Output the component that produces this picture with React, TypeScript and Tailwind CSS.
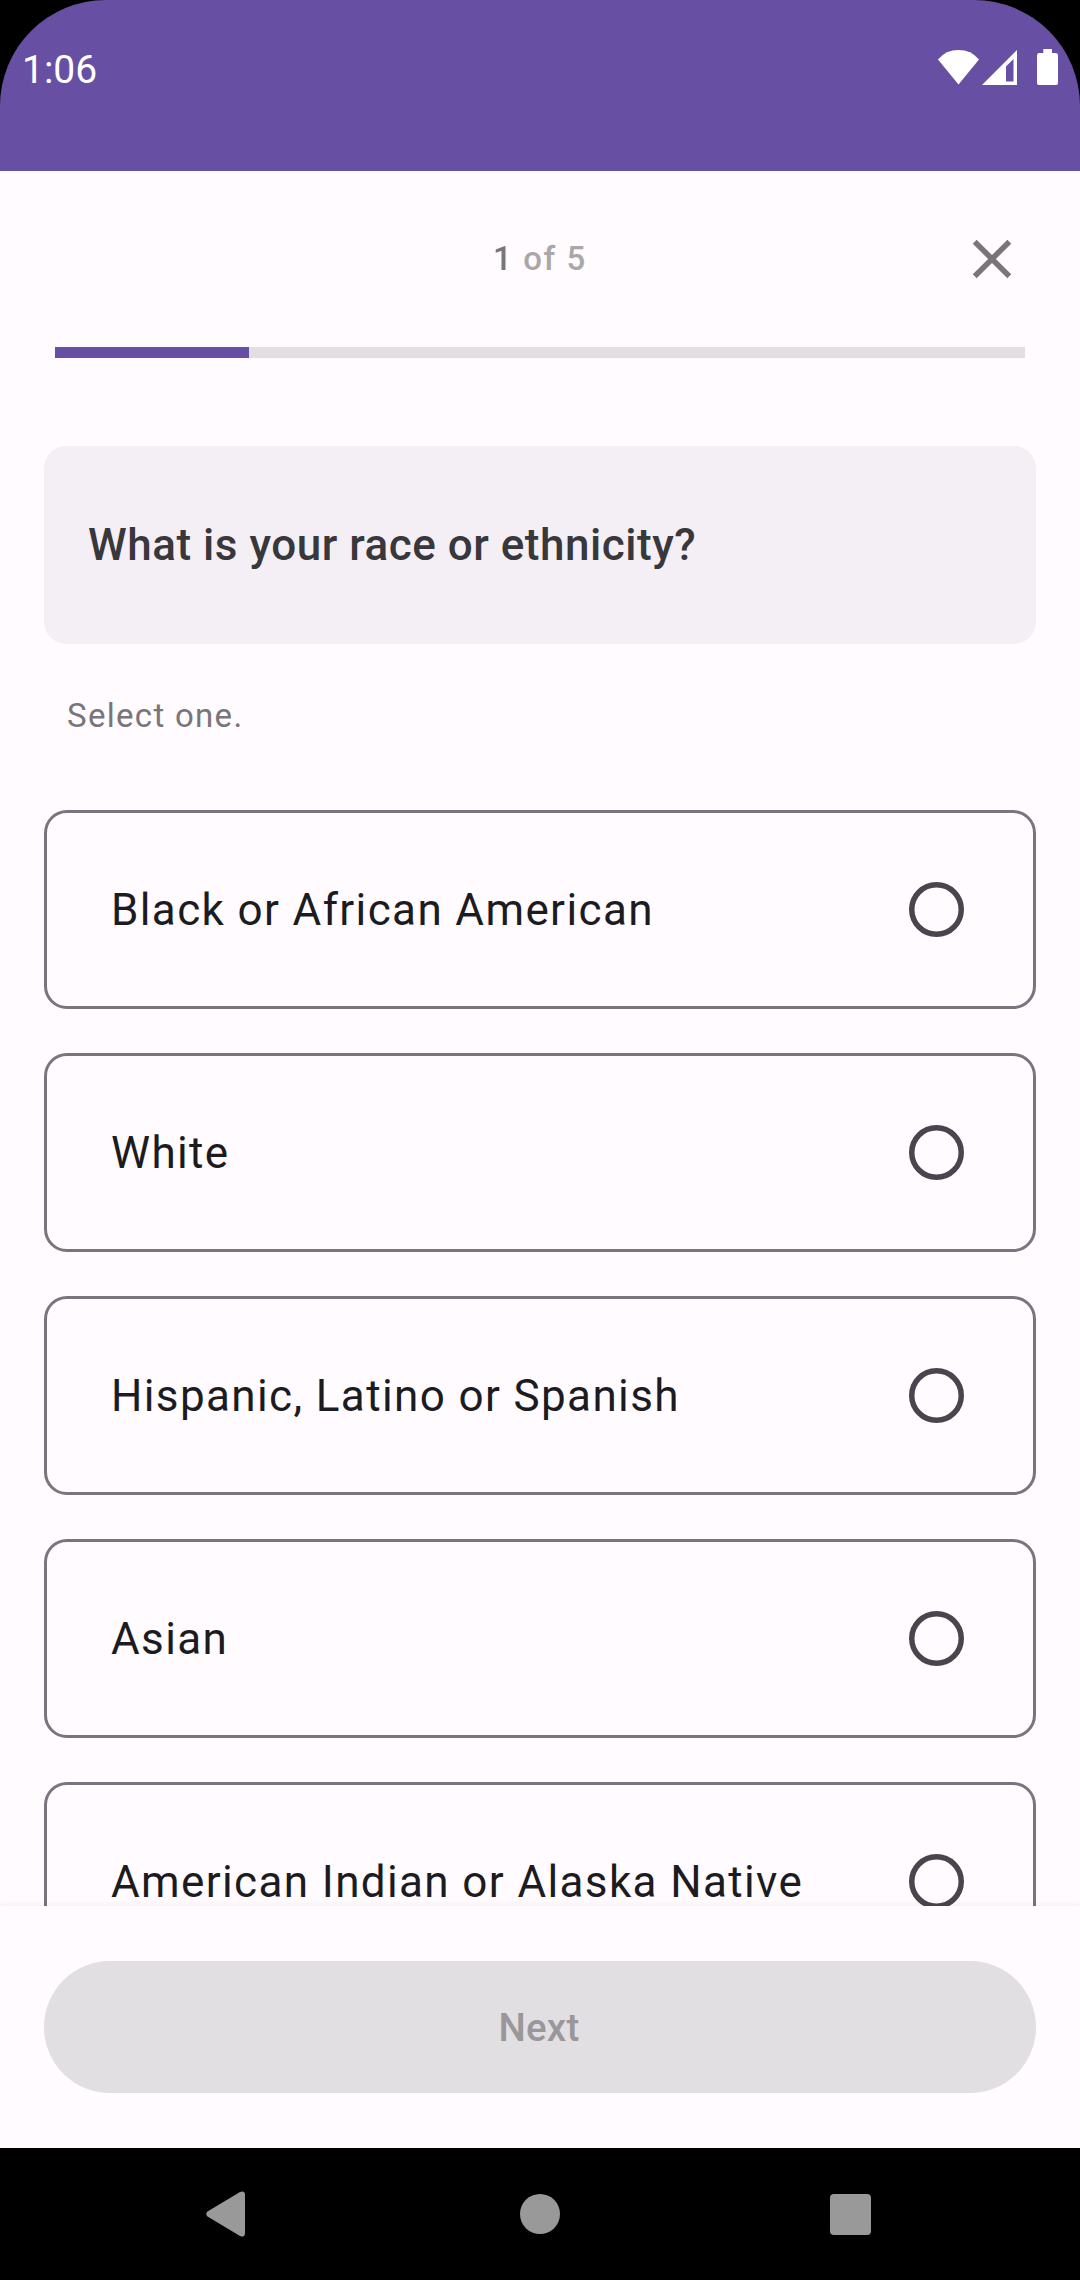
const options = [
  'Black or African American',
  'White',
  'Hispanic, Latino or Spanish',
  'Asian',
  'American Indian or Alaska Native',
];

function StatusBar() {
  return (
    <div className="bg-black h-[171px] shrink-0">
      <div className="h-full bg-[#6750A3] rounded-t-[106px] flex items-start justify-between pl-[22px] pr-[22px]">
        <span className="mt-[48px] text-[39px] leading-[45px] text-white">1:06</span>
        <svg className="mt-[48px]" width="120" height="38" viewBox="938 48 120 38" fill="#fff">
          <path d="M938 59.4 Q946 50 958.5 50 Q971 50 979 59.4 L958.5 84.5 Z" />
          <path fillRule="evenodd" d="M982 85 L1017 50 V85 Z M1006 81.5 H1013.5 V59 L1006 66.5 Z" />
          <path d="M1043.3 49 H1052 V53 H1055.6 Q1058 53 1058 55.4 V82.4 Q1058 85 1055.6 85 H1039.4 Q1037 85 1037 82.4 V55.4 Q1037 53 1039.4 53 H1043.3 Z" />
        </svg>
      </div>
    </div>
  );
}

function Option({ label }: { label: string }) {
  return (
    <div className="h-[199px] shrink-0 border-[3px] border-[#79747E] rounded-[23px] flex items-center justify-between pl-[64px] pr-[69px]">
      <span className="text-[44px] leading-[52px] tracking-[1.375px] text-[#1C1B1F] whitespace-nowrap">{label}</span>
      <svg width="55" height="55" viewBox="0 0 55 55" fill="none" stroke="#49454F" strokeWidth="5.5">
        <circle cx="27.5" cy="27.5" r="24.75" />
      </svg>
    </div>
  );
}

export default function App() {
  return (
    <div className="w-[1080px] h-[2280px] flex flex-col overflow-hidden bg-[#FFFBFF] font-['Roboto',sans-serif] antialiased">
      <StatusBar />
      <main className="flex-1 min-h-0 overflow-hidden flex flex-col px-[44px]">
        <header className="h-[176px] shrink-0 grid grid-cols-3 items-center">
          <span />
          <span className="text-center text-[33px] leading-[44px] tracking-[1.6px] font-medium text-[#A9A7AA]">
            <span className="text-[#78767A]">1</span> of 5
          </span>
          <svg className="justify-self-end mr-[11px]" width="66" height="66" viewBox="0 0 24 24" fill="#78767A">
            <path d="M19 6.41L17.59 5 12 10.59 6.41 5 5 6.41 10.59 12 5 17.59 6.41 19 12 13.41 17.59 19 19 17.59 13.41 12z" />
          </svg>
        </header>
        <div className="h-[11px] mx-[11px] shrink-0 bg-[#E2DFE2]">
          <div className="h-full w-1/5 bg-[#6750A3]" />
        </div>
        <section className="mt-[88px] h-[198px] shrink-0 rounded-[22px] bg-[#F4EFF4] flex items-center pl-[44px]">
          <h1 className="text-[44px] leading-[52px] tracking-[0.52px] font-medium text-[#38373B]">What is your race or ethnicity?</h1>
        </section>
        <p className="mt-[50px] ml-[23px] h-[44px] shrink-0 text-[33px] leading-[44px] tracking-[1.3px] text-[#78767A]">Select one.</p>
        <div className="mt-[72px] flex flex-col gap-[44px]">
          {options.map((label) => (
            <Option key={label} label={label} />
          ))}
        </div>
      </main>
      <footer className="relative h-[242px] shrink-0 bg-[#FFFBFF] shadow-[0_0_8px_rgba(0,0,0,0.08)] px-[44px] pt-[55px]">
        <button className="h-[132px] w-full rounded-full bg-[#E2DFE2] pr-[2px] text-[38.5px] leading-[55px] tracking-[0.2px] font-medium text-[#99979A]">Next</button>
      </footer>
      <nav className="relative h-[132px] shrink-0 bg-black grid grid-cols-3 items-center pl-[206px] pr-[209px]">
        <svg width="39" height="46" viewBox="0 0 39 46" fill="#999">
          <path d="M1.5 20.5 L34 1 Q39 -1 39 4 V42 Q39 47 34 45 L1.5 25.5 Q-1 23 1.5 20.5 Z" />
        </svg>
        <span className="size-[40px] rounded-full bg-[#999] justify-self-center ml-[3px]" />
        <span className="size-[41px] rounded-[4px] bg-[#999] justify-self-end" />
      </nav>
    </div>
  );
}
